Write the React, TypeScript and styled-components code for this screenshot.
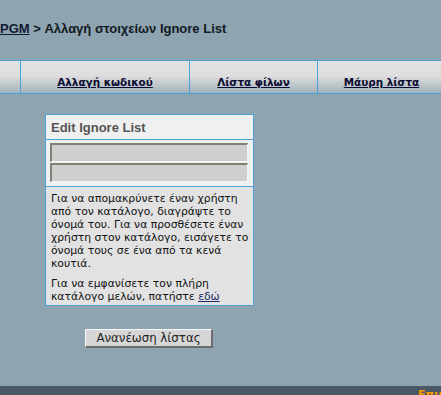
import React from 'react'
import styled, { createGlobalStyle } from 'styled-components'

const GlobalStyle = createGlobalStyle`
  html, body {
    margin: 0;
    padding: 0;
    background: #8fa4b1;
  }
  body {
    font-family: 'DejaVu Sans', Verdana, sans-serif;
    overflow: hidden;
  }
`

const Page = styled.div`
  display: flex;
  flex-direction: column;
  width: 441px;
  height: 395px;
  background: #8fa4b1;
  overflow: hidden;
`
const Crumb = styled.h1`
  margin: 21px 0 0 0;
  font-family: 'Liberation Sans', Arial, sans-serif;
  font-size: 13px;
  line-height: 16px;
  font-weight: bold;
  color: #111a22;
  white-space: nowrap;
  a {
    color: #111a33;
    text-decoration: underline;
  }
`
const NavBar = styled.div`
  display: flex;
  margin-top: 23px;
  height: 32px;
  border-top: 1px solid #4aa3d8;
  border-bottom: 1px solid #4aa3d8;
  background: linear-gradient(to bottom, #e2e2e2 0%, #dedede 45%, #b9c2c8 80%, #a3b0b9 100%);
`
const NavCell = styled.div<{ $w: number }>`
  flex: 0 0 ${(p) => p.$w}px;
  display: flex;
  align-items: flex-end;
  justify-content: center;
  padding-bottom: 5px;
  box-sizing: border-box;
  border-right: 1px solid #4aa3d8;
  a {
    font-family: 'DejaVu Sans', Verdana, sans-serif;
    font-size: 10.4px;
    font-weight: bold;
    color: #0a0a30;
    text-decoration: underline;
    white-space: nowrap;
  }
`
const Content = styled.div`
  display: flex;
  flex-direction: column;
  align-items: flex-start;
  padding: 20px 0 0 45px;
`
const Panel = styled.div`
  width: 209px;
  box-sizing: border-box;
  border: 1px solid #4aa3d8;
  background: #f0f0f0;
`
const PanelHead = styled.div`
  height: 24px;
  padding: 0 0 0 5px;
  display: flex;
  align-items: center;
  font-family: 'Liberation Sans', Arial, sans-serif;
  font-size: 13px;
  font-weight: bold;
  color: #555555;
  border-bottom: 1px solid #4aa3d8;
`
const Inputs = styled.div`
  display: flex;
  flex-direction: column;
  gap: 1px;
  padding: 3px 5px 4px 4px;
  border-bottom: 1px solid #4aa3d8;
`
const Field = styled.input`
  height: 19px;
  width: 198px;
  box-sizing: border-box;
  margin: 0;
  padding: 0 3px;
  background: #cfcfcf;
  border-style: solid;
  border-width: 2px 1px 1px 2px;
  border-color: #7f7f74 #f4f4f4 #f4f4f4 #7f7f74;
  outline: none;
`
const Help = styled.div`
  background: #e2e2e2;
  padding: 5px 3px 2px 5px;
  font-size: 10.8px;
  line-height: 13px;
  color: #111111;
  p {
    margin: 0;
  }
  p + p {
    margin-top: 7px;
  }
  a {
    color: #1a2a66;
    text-decoration: underline;
  }
`
const RefreshButton = styled.button`
  margin: 23px 0 0 40px;
  width: 128px;
  height: 19px;
  padding: 0;
  background: #d6d6d6;
  border-style: solid;
  border-width: 1px 2px 2px 1px;
  border-color: #f8f8f8 #6d6d6d #6d6d6d #f8f8f8;
  font-family: 'DejaVu Sans', Verdana, sans-serif;
  font-size: 11.8px;
  color: #222222;
`
const Footer = styled.div`
  margin-top: auto;
  height: 9px;
  background: #4b5966;
  display: flex;
  justify-content: flex-start;
  padding-left: 418px;
  overflow: hidden;
  span {
    font-family: 'DejaVu Sans', Verdana, sans-serif;
    font-size: 11px;
    font-weight: bold;
    color: #ff9900;
    line-height: 13px;
    margin-top: 2px;
    white-space: nowrap;
  }
`

const App: React.FC = () => {
  return (
    <Page>
      <GlobalStyle />
      <Crumb>
        <a href="#">PGM</a> &gt; Αλλαγή στοιχείων Ignore List
      </Crumb>
      <NavBar>
        <NavCell $w={21} />
        <NavCell $w={169}>
          <a href="#">Αλλαγή κωδικού</a>
        </NavCell>
        <NavCell $w={128}>
          <a href="#">Λίστα φίλων</a>
        </NavCell>
        <NavCell $w={128}>
          <a href="#">Μάυρη λίστα</a>
        </NavCell>
      </NavBar>
      <Content>
        <Panel>
          <PanelHead>Edit Ignore List</PanelHead>
          <Inputs>
            <Field type="text" />
            <Field type="text" />
          </Inputs>
          <Help>
            <p>
              Για να απομακρύνετε έναν χρήστη από τον κατάλογο, διαγράψτε το όνομά του. Για να
              προσθέσετε έναν χρήστη στον κατάλογο, εισάγετε το όνομά τους σε ένα από τα κενά
              κουτιά.
            </p>
            <p>
              Για να εμφανίσετε τον πλήρη κατάλογο μελών, πατήστε <a href="#">εδώ</a>
            </p>
          </Help>
        </Panel>
        <RefreshButton>Ανανέωση λίστας</RefreshButton>
      </Content>
      <Footer>
        <span>Επικοινωνία</span>
      </Footer>
    </Page>
  )
}

export default App
